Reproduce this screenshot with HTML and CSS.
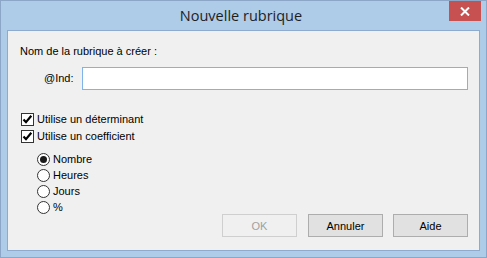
FILE: index.html
```html
<!DOCTYPE html>
<html lang="fr">
<head>
<meta charset="utf-8">
<title>Nouvelle rubrique</title>
<link rel="stylesheet" href="styles.css">
</head>
<body>
<div class="window">
  <div class="titlebar">
    <span class="spacer"></span>
    <span class="title">Nouvelle rubrique</span>
    <button class="close" type="button" aria-label="Fermer">
      <svg width="10" height="9" viewBox="0 0 10 9"><path d="M1 0.5 L9 8.5 M9 0.5 L1 8.5" stroke="#fff" stroke-width="2" fill="none"/></svg>
    </button>
  </div>
  <div class="client">
    <div class="heading">Nom de la rubrique à créer :</div>
    <div class="field">
      <label class="field-label">@Ind:</label>
      <div class="input"></div>
    </div>
    <div class="checks">
      <div class="check-row">
        <span class="checkbox"><svg width="11" height="11" viewBox="0 0 11 11"><path d="M1.5 5.5 L4 8.2 L9.3 1.8" stroke="#000" stroke-width="2.2" fill="none"/></svg></span>
        <span class="lbl">Utilise un déterminant</span>
      </div>
      <div class="check-row">
        <span class="checkbox"><svg width="11" height="11" viewBox="0 0 11 11"><path d="M1.5 5.5 L4 8.2 L9.3 1.8" stroke="#000" stroke-width="2.2" fill="none"/></svg></span>
        <span class="lbl">Utilise un coefficient</span>
      </div>
    </div>
    <div class="lower">
      <div class="radios">
        <div class="radio-row"><span class="radio checked"></span><span class="lbl">Nombre</span></div>
        <div class="radio-row"><span class="radio"></span><span class="lbl">Heures</span></div>
        <div class="radio-row"><span class="radio"></span><span class="lbl">Jours</span></div>
        <div class="radio-row"><span class="radio"></span><span class="lbl">%</span></div>
      </div>
      <div class="buttons">
        <button class="btn disabled" type="button">OK</button>
        <button class="btn btn-annuler" type="button">Annuler</button>
        <button class="btn btn-aide" type="button">Aide</button>
      </div>
    </div>
  </div>
</div>
</body>
</html>
```
FILE: styles.css
```css
html, body {
  margin: 0;
  padding: 0;
  background: #ffffff;
}
body {
  font-family: "Liberation Sans", Arial, sans-serif;
  font-size: 11px;
  color: #000;
}
.window {
  width: 487px;
  height: 258px;
  box-sizing: border-box;
  border: 1px solid #8ba6c6;
  background: #aecbe7;
  display: flex;
  flex-direction: column;
}
.titlebar {
  height: 29px;
  display: grid;
  grid-template-columns: 1fr auto 1fr;
  align-items: start;
  padding-right: 5px;
}
.title {
  font-family: "Open Sans", "Noto Sans", sans-serif;
  font-size: 14.5px;
  line-height: 29px;
  color: #1e1e1e;
  white-space: nowrap;
}
.close {
  justify-self: end;
  width: 32px;
  height: 20px;
  border: 0;
  padding: 0;
  margin: 0;
  background: #c75050;
  display: flex;
  align-items: center;
  justify-content: center;
}
.close svg { display: block; }
.client {
  flex: 1;
  margin: 0 6px 6px 6px;
  border: 1px solid #8eabcf;
  background: #f0f0f0;
  padding: 14px 11px 13px 12px;
  display: flex;
  flex-direction: column;
}
.heading {
  line-height: 13px;
  height: 13px;
}
.field {
  margin-top: 9px;
  display: flex;
  align-items: center;
  padding-left: 24px;
}
.field-label {
  width: 38px;
  line-height: 23px;
}
.input {
  width: 387px;
  height: 23px;
  box-sizing: border-box;
  border: 1px solid #7eb4ea;
  background: #fff;
}
.checks {
  margin-top: 21px;
  display: flex;
  flex-direction: column;
}
.check-row {
  height: 17px;
  display: flex;
  align-items: center;
  padding-left: 1px;
  gap: 3px;
}
.checkbox {
  width: 13px;
  height: 13px;
  box-sizing: border-box;
  border: 1px solid #333;
  background: #fff;
  display: flex;
  align-items: center;
  justify-content: center;
}
.checkbox svg { display: block; }
.lbl {
  line-height: 13px;
  white-space: nowrap;
}
.lower {
  flex: 1;
  margin-top: 6px;
  display: flex;
  align-items: flex-end;
}
.radios {
  align-self: flex-start;
  padding-left: 17px;
  display: flex;
  flex-direction: column;
}
.radio-row {
  height: 16px;
  display: flex;
  align-items: center;
  gap: 3px;
}
.radio {
  width: 13px;
  height: 13px;
  box-sizing: border-box;
  border: 1px solid #333;
  border-radius: 50%;
  background: #fff;
  display: flex;
  align-items: center;
  justify-content: center;
}
.radio.checked::after {
  content: "";
  width: 7px;
  height: 7px;
  border-radius: 50%;
  background: #1a1a1a;
}
.buttons {
  margin-left: auto;
  display: flex;
}
.btn {
  width: 75px;
  height: 23px;
  box-sizing: border-box;
  border: 1px solid #adadad;
  background: #e1e1e1;
  font-family: "Liberation Sans", Arial, sans-serif;
  font-size: 11px;
  color: #000;
  padding: 0;
  margin: 0;
}
.btn.disabled {
  border-color: #cfcfcf;
  background: #f0f0f0;
  color: #a0a0a0;
}
.btn-annuler { margin-left: 11px; }
.btn-aide { margin-left: 10px; }
```
